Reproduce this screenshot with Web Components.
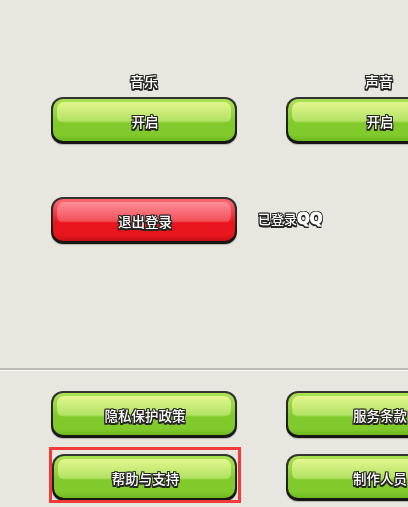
<!DOCTYPE html>
<html lang="zh">
<head>
<meta charset="utf-8">
<style>
html,body{margin:0;padding:0;}
body{width:408px;height:507px;overflow:hidden;background:#e7e6df;}
b{font:bold 15px "DejaVu Sans",sans-serif;-webkit-text-stroke:.9px #fff;}
</style>
</head>
<body>
<settings-screen>
  <settings-row>
    <labelled-control label="音乐"><game-button>开启</game-button></labelled-control>
    <labelled-control label="声音"><game-button>开启</game-button></labelled-control>
  </settings-row>
  <account-row slot="account">
    <game-button variant="red">退出登录</game-button>
    <span slot="status">已登录<b>QQ</b></span>
  </account-row>
  <links-grid slot="links">
    <game-button>隐私保护政策</game-button>
    <game-button>服务条款</game-button>
    <focus-ring><game-button>帮助与支持</game-button></focus-ring>
    <game-button>制作人员</game-button>
  </links-grid>
</settings-screen>
<script>
const FONT = '"Noto Sans CJK SC","Liberation Sans",sans-serif';
const C='#262622';
const OUTLINE = `-1px 0 0 ${C},1px 0 0 ${C},0 -1px 0 ${C},0 1px 0 ${C},-1px -1px 0 ${C},1px -1px 0 ${C},-1px 1px 0 ${C},1px 1px 0 ${C},0 2px 0 ${C},1px 2px 0 ${C},-1px 2px 0 ${C}`;
function def(name, html){
  customElements.define(name, class extends HTMLElement{
    constructor(){super();this.attachShadow({mode:'open'}).innerHTML=html;}
    connectedCallback(){
      const l=this.shadowRoot.querySelector('[data-label]');
      if(l) l.textContent=this.getAttribute('label')||'';
    }
  });
}
def('settings-screen',`<style>
:host{display:flex;flex-direction:column;width:408px;height:507px;overflow:hidden;box-sizing:border-box;padding:71px 0 0 0;font-family:${FONT};}
.top{padding-left:51px;}
.account{padding:53px 0 0 51px;}
hr{border:0;margin:124px 0 0;height:3px;background:linear-gradient(#bdbcb4 0 2px,#f6f6f2 2px);flex:none;}
.links{padding:20px 0 0 51px;}
</style>
<div class="top"><slot></slot></div>
<div class="account"><slot name="account"></slot></div>
<hr>
<div class="links"><slot name="links"></slot></div>`);
def('settings-row',`<style>:host{display:flex;gap:49px;width:max-content;}</style><slot></slot>`);
def('labelled-control',`<style>
:host{display:flex;flex-direction:column;align-items:center;width:186px;flex:none;}
.l{height:26px;line-height:21px;font-size:14px;font-weight:500;color:#fff;text-shadow:${OUTLINE};filter:blur(.5px);}
</style><div class="l" data-label></div><slot></slot>`);
def('account-row',`<style>
:host{display:flex;align-items:center;gap:21px;width:max-content;}
::slotted(span){font-size:13px;font-weight:500;color:#fff;text-shadow:${OUTLINE};filter:blur(.5px);margin-top:-4px;}
::slotted(game-button){flex:none;}
</style><slot></slot><slot name="status"></slot>`);
def('links-grid',`<style>:host{display:grid;grid-template-columns:186px 186px;column-gap:49px;row-gap:16px;width:max-content;}</style><slot></slot>`);
def('focus-ring',`<style>
:host{display:block;position:relative;}
::slotted(game-button){width:185px;margin-left:1px;}
.r{position:absolute;left:-2px;top:-7px;width:192px;height:56px;box-sizing:border-box;border:3px solid #f33a3a;pointer-events:none;}
</style><slot></slot><div class="r"></div>`);
def('game-button',`<style>
:host{display:flex;width:186px;height:47px;box-sizing:border-box;flex:none;border-radius:12px;background:linear-gradient(#33342f,#141510);padding:2px 2px 3px;box-shadow:0 1px 1px #b5b4ad;
  --top:#a8e052;--gloss-a:#e4f68f;--gloss-b:#b2e264;--mid:#80ca2c;--bot:#6eb81f;}
:host([variant=red]){--top:#f8636c;--gloss-a:#fc8f98;--gloss-b:#f4505a;--mid:#e9151d;--bot:#c30e15;}
.b{position:relative;flex:1;border-radius:10px;background:linear-gradient(var(--top) 0 3px,var(--mid) 24px,var(--mid) 36px,var(--bot) 42px);display:flex;align-items:center;justify-content:center;overflow:hidden;}
.g{position:absolute;left:4px;right:4px;top:3px;height:21px;border-radius:7px;background:linear-gradient(var(--gloss-a),var(--gloss-b) 90%,var(--mid));filter:blur(.6px);}
.t{position:relative;font-family:${FONT};font-size:13.5px;font-weight:500;color:#fff;text-shadow:${OUTLINE};filter:blur(.5px);margin:1px 0 0 2px;white-space:nowrap;}
</style><div class="b"><div class="g"></div><span class="t"><slot></slot></span></div>`);
</script>
</body>
</html>
